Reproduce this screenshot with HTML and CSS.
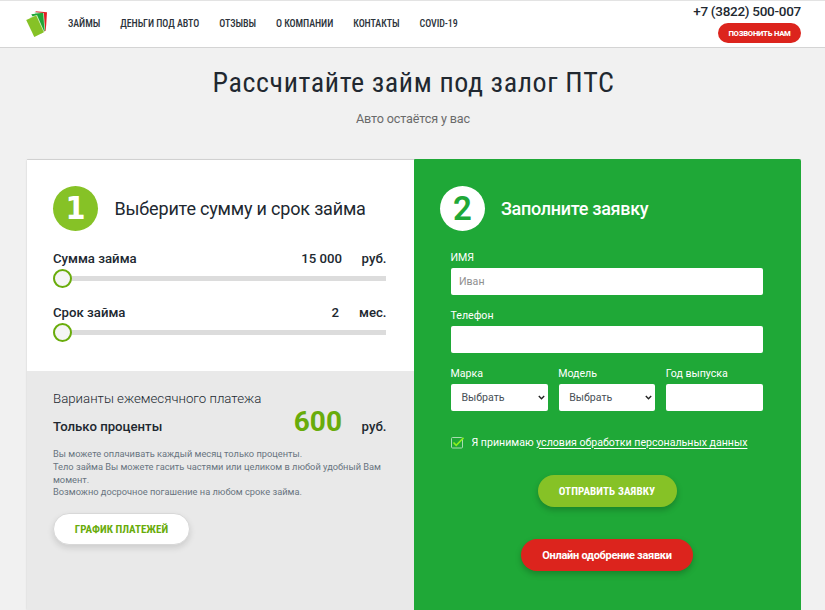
FILE: index.html
```html
<!DOCTYPE html>
<html lang="ru">
<head>
<meta charset="utf-8">
<title>Займ под залог ПТС</title>
<link rel="stylesheet" href="styles.css">
</head>
<body>
<header class="header">
  <svg class="logo" width="24" height="28" viewBox="0 0 24 28">
    <path fill="#e31e24" d="M10.5 1.2 22 2.3 20.8 20.5 18 22Z"/>
    <path fill="#b9e3c0" d="M9.5 2 18.8 2.9 20.3 20 17 23Z"/>
    <path fill="#1fa637" d="M6.3 4.2 18 2.8 19.6 21 16 22Z"/>
    <path fill="#d9efc4" d="M5 7 12 5 19.2 21.5 16 24Z"/>
    <path fill="#86c226" d="M1.2 10 11.2 5.5 18.8 22.3 9.3 27Z"/>
  </svg>
  <nav class="nav">
    <a>ЗАЙМЫ</a><a>ДЕНЬГИ ПОД АВТО</a><a>ОТЗЫВЫ</a><a>О КОМПАНИИ</a><a>КОНТАКТЫ</a><a>COVID-19</a>
  </nav>
  <div class="contact">
    <div class="phone">+7 (3822) 500-007</div>
    <button class="call">ПОЗВОНИТЬ НАМ</button>
  </div>
</header>
<main>
  <h1>Рассчитайте займ под залог ПТС</h1>
  <p class="subtitle">Авто остаётся у вас</p>
  <div class="card">
    <section class="left">
      <div class="calc">
        <div class="step"><span class="num one">1</span><h2>Выберите сумму и срок займа</h2></div>
        <div class="row"><span>Сумма займа</span><span class="val">15 000</span><span class="unit">руб.</span></div>
        <div class="slider"><i class="knob"></i></div>
        <div class="row second"><span>Срок займа</span><span class="val term">2</span><span class="unit">мес.</span></div>
        <div class="slider"><i class="knob"></i></div>
      </div>
      <div class="result">
        <div class="variants">Варианты ежемесячного платежа</div>
        <div class="row pay"><span>Только проценты</span><span class="val sum">600</span><span class="unit">руб.</span></div>
        <p class="note">Вы можете оплачивать каждый месяц только проценты.<br>Тело займа Вы можете гасить частями или целиком в любой удобный Вам<br>момент.<br>Возможно досрочное погашение на любом сроке займа.</p>
        <button class="btn schedule">ГРАФИК ПЛАТЕЖЕЙ</button>
      </div>
    </section>
    <section class="right">
      <div class="step"><span class="num two">2</span><h2>Заполните заявку</h2></div>
      <form class="form">
        <label>ИМЯ</label>
        <div class="field">Иван</div>
        <label>Телефон</label>
        <div class="field"></div>
        <div class="cols">
          <div><label>Марка</label><div class="field select">Выбрать<svg width="7" height="5" viewBox="0 0 7 5"><path d="M.8 1 3.5 3.7 6.2 1" fill="none" stroke="#222" stroke-width="1.4"/></svg></div></div>
          <div><label>Модель</label><div class="field select">Выбрать<svg width="7" height="5" viewBox="0 0 7 5"><path d="M.8 1 3.5 3.7 6.2 1" fill="none" stroke="#222" stroke-width="1.4"/></svg></div></div>
          <div><label>Год выпуска</label><div class="field"></div></div>
        </div>
        <div class="agree">
          <svg width="13" height="13" viewBox="0 0 13 13"><rect x=".5" y="1.5" width="11" height="10.5" rx="1" fill="none" stroke="#a9dcb2"/><path d="M2.5 6.5 5.2 9.3 12.6 1.8" fill="none" stroke="#8cf01e" stroke-width="1.6"/></svg>
          <span>Я принимаю <a>условия обработки персональных данных</a></span>
        </div>
      </form>
      <div class="actions">
        <button class="btn send">ОТПРАВИТЬ ЗАЯВКУ</button>
        <button class="btn online">Онлайн одобрение заявки</button>
      </div>
    </section>
  </div>
</main>
</body>
</html>
```
FILE: styles.css
```css
* { box-sizing: border-box; }
html, body { height: 610px; overflow: hidden; }
body { margin: 0; background: #f1f1f1; color: #212830; font-family: Roboto, "Noto Sans", sans-serif; }
h1, h2, p { margin: 0; }
button { border: 0; padding: 0; display: block; white-space: nowrap; font-family: Roboto, "Noto Sans", sans-serif; }
h1, .nav, .num, .send, .schedule { font-stretch: 85%; }

.header { height: 48px; display: flex; background: #fff; border-top: 1px solid #e3e3e3; border-bottom: 1px solid #d4d4d4; padding: 0 24px 0 25px; }
.logo { margin-top: 8.5px; flex: none; }
.nav { display: flex; gap: 20px; margin-left: 19px; padding-top: 16px; font-size: 10px; line-height: 14px; font-weight: 500; color: #2c333b; white-space: nowrap; letter-spacing: -.06px; }
.contact { margin-left: auto; display: flex; flex-direction: column; align-items: flex-end; }
.phone { font-size: 13.5px; line-height: 18px; margin-top: 1px; letter-spacing: -.28px; font-weight: 500; white-space: nowrap; }
.call { margin-top: 3px; width: 83px; height: 20px; border-radius: 10px; background: #dc241d; color: #fff; font-size: 7.7px; font-weight: 800; letter-spacing: -.25px; }

h1 { margin-top: 16px; padding-left: 2px; font-size: 28px; line-height: 38px; font-weight: 400; text-align: center; letter-spacing: .59px; }
.subtitle { margin-top: 9px; padding-left: 1px; font-size: 12.6px; line-height: 16px; text-align: center; color: #6a6a6a; letter-spacing: -.13px; }
.card { display: flex; width: 774px; height: 451px; margin: 32px 0 0 27px; border-top: 1px solid #dcdcdc; }
.left { width: 387px; display: flex; flex-direction: column; box-shadow: 0 0 2px rgba(0,0,0,.15); }
.calc { height: 211px; background: #fff; padding: 26px 28px 0 26px; }
.result { flex: 1; background: #e9e9e9; padding: 0 28px 0 26px; }
.right { width: 387px; margin-top: -1px; background: #1fa837; padding: 27px 26px 0; border-radius: 1px 2px 0 0; color: #fff; }
.step { display: flex; align-items: center; height: 45px; }
.num { width: 45px; height: 45px; border-radius: 50%; background: #86c226; color: #fff; font-size: 34px; line-height: 45px; font-weight: 800; text-align: center; }
.one { font-family: "DejaVu Sans Condensed", "DejaVu Sans", sans-serif; font-size: 32px; font-weight: 700; }
.two { background: #fff; color: #1fa837; font-weight: 600; font-stretch: 100%; font-size: 33px; }
h2 { margin-left: 16.5px; font-size: 18px; line-height: 24px; font-weight: 400; letter-spacing: -.18px; white-space: nowrap; }
.right h2 { font-weight: 500; letter-spacing: -.3px; margin-left: 16px; }

.row { display: flex; align-items: baseline; font-size: 13.2px; line-height: 18px; font-weight: 500; margin: 19px -.5px 0 0; }
.val { margin-left: auto; }
.term { margin-right: 3px; }
.unit { width: 44.5px; text-align: right; }
.slider { position: relative; height: 5px; background: #dcdcdc; margin-top: 8px; }
.second { margin-top: 23px; }
.knob { position: absolute; left: 0; top: -7px; width: 19px; height: 19px; border-radius: 50%; border: 2px solid #69ac0b; background: #f5f5f5; }

.variants { font-size: 13.25px; line-height: 18px; padding-top: 19px; font-weight: 300; }
.pay { margin-top: 0; line-height: 28px; }
.sum { font-size: 28px; font-weight: 700; color: #69ac0b; }
.note { margin-top: 7px; font-size: 9.27px; line-height: 12.8px; color: #68747f; white-space: nowrap; }
.btn { height: 32px; border-radius: 16px; font-size: 11px; font-weight: 700; color: #fff; box-shadow: 0 3px 6px rgba(0,0,0,.22); }
.schedule { width: 137px; margin-top: 14px; background: #fff; color: #69ac0b; border: 1px solid #d8d8d8; box-shadow: 0 3px 6px rgba(0,0,0,.12); }

.form { padding: 18px 12px 0 11px; }
label { display: block; font-size: 10.6px; line-height: 18px; margin-left: -.5px; }
.field { height: 27px; border-radius: 2px; background: #fff; color: #8f8f8f; font-size: 10.6px; line-height: 27px; padding-left: 8px; margin: 1px 0 12px; }
.cols { display: grid; grid-template-columns: repeat(3, 1fr); gap: 11px; }
.select { display: flex; align-items: center; color: #495057; padding: 0 3px 0 10.5px; justify-content: space-between; }
.agree { display: flex; align-items: center; gap: 7.5px; margin-top: 10px; height: 18px; font-size: 10.6px; white-space: nowrap; }
.agree a { text-decoration: underline; text-underline-offset: 2px; }
.actions { display: flex; flex-direction: column; align-items: center; gap: 32px; padding: 24px 1px 0 0; }
.send { width: 139px; background: #86c226; letter-spacing: .1px; }
.online { width: 172px; background: #dc241d; letter-spacing: -.28px; }
```
